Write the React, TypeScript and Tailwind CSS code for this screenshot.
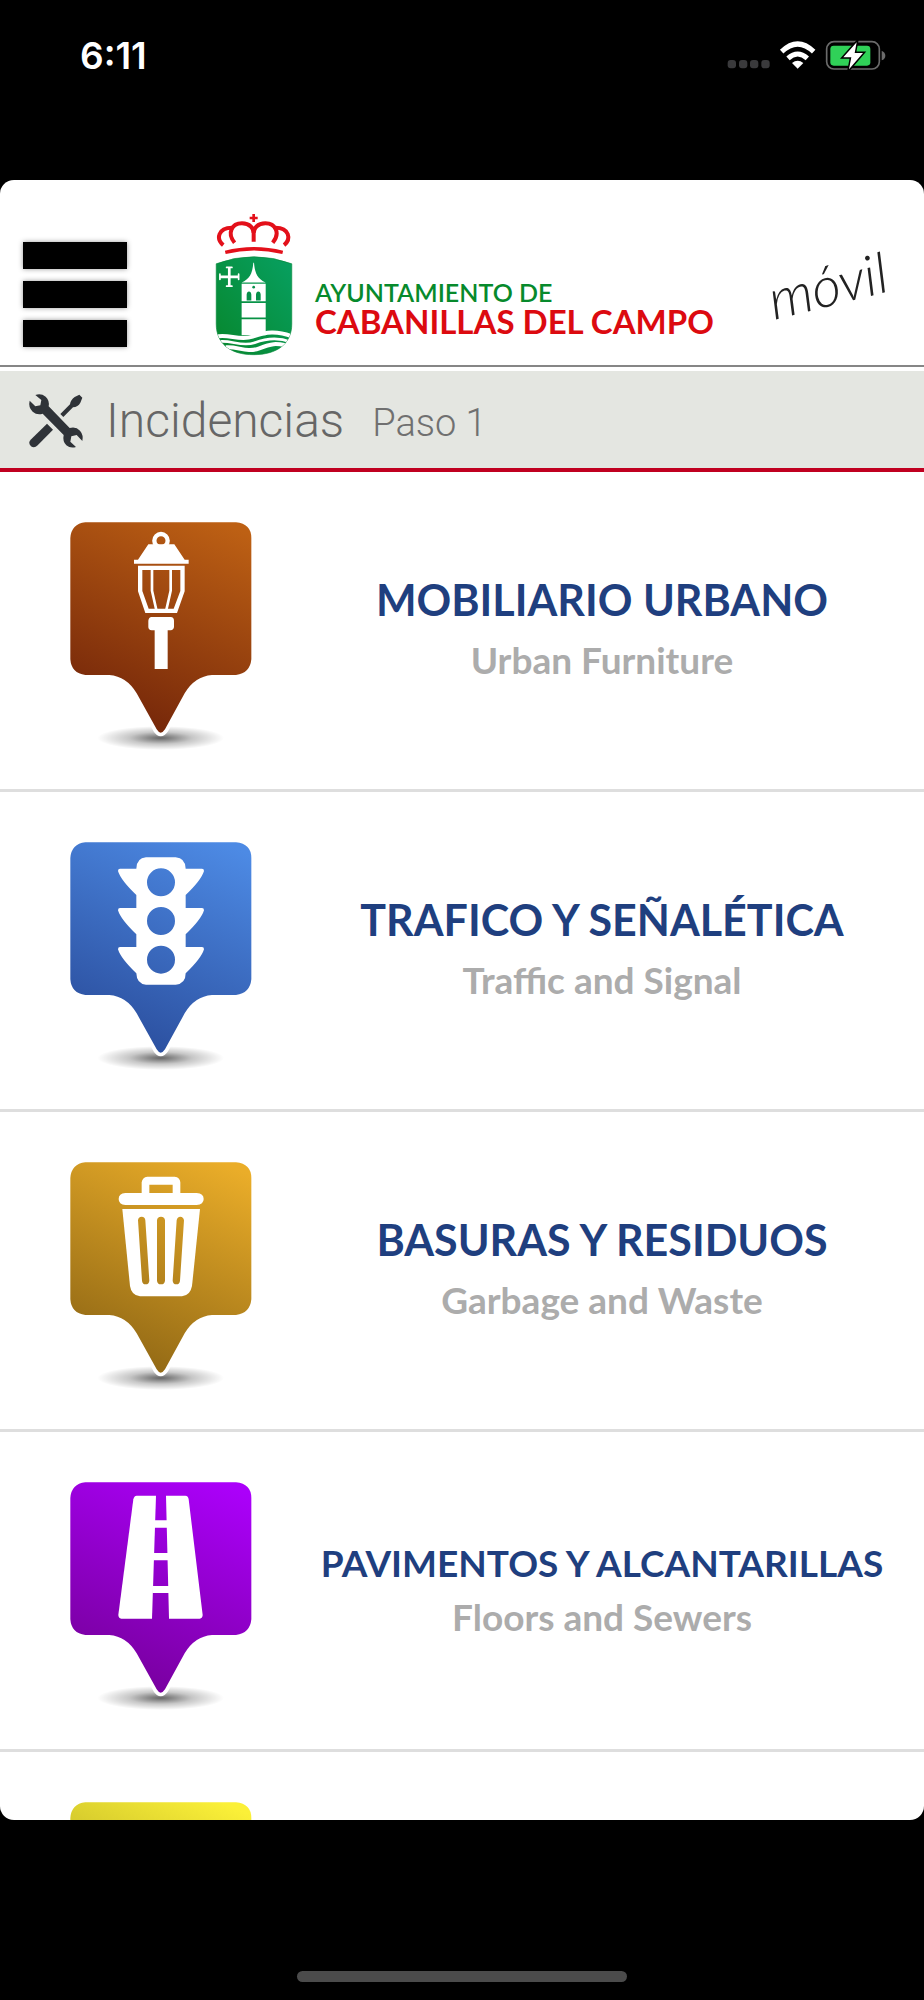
import React from 'react';

type GlyphName = 'lamp' | 'traffic' | 'trash' | 'road';

interface Category {
  id: string;
  title?: string;
  subtitle?: string;
  glyph?: GlyphName;
  from: string;
  to: string;
  compact?: boolean;
}

const categories: Category[] = [
  { id: 'mobiliario', title: 'MOBILIARIO URBANO', subtitle: 'Urban Furniture', glyph: 'lamp', from: '#bd6014', to: '#78290a' },
  { id: 'trafico', title: 'TRAFICO Y SEÑALÉTICA', subtitle: 'Traffic and Signal', glyph: 'traffic', from: '#4d8ae4', to: '#2d52a2' },
  { id: 'basuras', title: 'BASURAS Y RESIDUOS', subtitle: 'Garbage and Waste', glyph: 'trash', from: '#eaad29', to: '#966c16' },
  { id: 'pavimentos', title: 'PAVIMENTOS Y ALCANTARILLAS', subtitle: 'Floors and Sewers', glyph: 'road', from: '#ab00fa', to: '#7a00a2', compact: true },
  { id: 'otros', from: '#fbf038', to: '#9a8f1c' },
];

export default function App() {
  return (
    <div className="flex h-screen flex-col bg-black font-['Lato',sans-serif]">
      <StatusBar />

      <main className="flex min-h-0 flex-1 flex-col overflow-hidden rounded-[14px] bg-white">
        <Header />

        {/* Section title */}
        <div className="mt-1 flex h-[101px] shrink-0 items-center border-b-4 border-[#c00020] bg-[#e4e6e1] pt-0.5 pl-7 font-['Roboto',sans-serif] font-light">
          <ToolsIcon />
          <h1 className="ml-[22px] text-5xl text-[#666]">Incidencias</h1>
          <span className="ml-7 pt-1 text-[38px] leading-[48px] text-[#707070]">Paso 1</span>
        </div>

        {/* Categories */}
        <ul className="min-h-0 flex-1 overflow-y-auto [scrollbar-width:none]">
          {categories.map((category) => (
            <li key={category.id} className="border-b-3 border-[#dedede]">
              <CategoryRow category={category} />
            </li>
          ))}
        </ul>
      </main>

      <footer className="flex h-[180px] shrink-0 items-end justify-center pb-[18px]">
        <div className="h-[11px] w-[330px] rounded-full bg-[#4b4b4b]" />
      </footer>
    </div>
  );
}

function StatusBar() {
  return (
    <div className="flex h-[180px] shrink-0 items-start justify-between pt-8 pr-[38px] pl-20">
      <span className="font-['Inter',sans-serif] text-[37px] leading-[48px] font-semibold text-white">6:11</span>
      <svg className="mt-2 h-8 w-[160px]" viewBox="20 45 480 96" fill="none">
        <g fill="#3a3a3c">
          <rect x="25" y="105" width="25" height="25" rx="9" />
          <rect x="59" y="105" width="25" height="25" rx="9" />
          <rect x="92" y="105" width="25" height="25" rx="9" />
          <rect x="126" y="105" width="25" height="25" rx="9" />
        </g>
        {/* wifi */}
        <g stroke="#fff" strokeWidth="15">
          <path d="M187 80Q235 34 283 80" />
          <path d="M206 100Q235 74 264 100" />
        </g>
        <path d="M218 114Q235 100 252 114L235 131Z" fill="#fff" />
        {/* battery */}
        <rect x="322" y="50" width="158" height="82" rx="22" stroke="#6b6b6b" strokeWidth="5" />
        <path d="M487 77Q498 82 498 92T487 106Z" fill="#6b6b6b" />
        <rect x="333" y="62" width="120" height="60" rx="10" fill="#30d158" />
        <path d="M412 52L372 97H396L389 133L431 84H406Z" fill="#fff" stroke="#000" strokeWidth="9" paintOrder="stroke" />
      </svg>
    </div>
  );
}

function Header() {
  return (
    <header className="flex h-[187px] shrink-0 items-center border-b-2 border-[#868686] pt-6 pr-9 pl-[23px]">
      <button type="button" className="flex w-[104px] shrink-0 flex-col gap-3 pt-5">
        <span className="h-[27px] bg-black shadow-[0_0_5px_#999]" />
        <span className="h-[27px] bg-black shadow-[0_0_5px_#999]" />
        <span className="h-[27px] bg-black shadow-[0_0_5px_#999]" />
      </button>
      <Crest />
      <div className="ml-[22px] pt-12 whitespace-nowrap">
        <p className="text-[25px] leading-6 font-semibold text-[#078a2c]">AYUNTAMIENTO DE</p>
        <p className="text-[33px] leading-[34px] font-bold text-[#dc0a10]">CABANILLAS DEL CAMPO</p>
      </div>
      <span className="ml-auto -rotate-14 text-[56px] font-light text-[#222] italic">móvil</span>
    </header>
  );
}

function Crest() {
  return (
    <svg className="ml-[88px] h-[143px] w-[78px] shrink-0" viewBox="46 38 232 428" fill="none">
      <defs>
        <linearGradient id="crest-field" x1="0" y1="1" x2="1" y2="0">
          <stop offset="0" stopColor="#07862c" />
          <stop offset="1" stopColor="#07a061" />
        </linearGradient>
        <clipPath id="crest-clip">
          <path d="M49 190Q161 148 275 190V370C275 430 230 462 161 462S49 430 49 370Z" />
        </clipPath>
      </defs>
      {/* crown */}
      <g stroke="#e3101a" strokeWidth="12">
        <path d="M161 41V65M149 53H173" strokeWidth="8" />
        <path d="M70 134C48 116 54 82 96 82" />
        <path d="M252 134C274 116 268 82 226 82" />
        <path d="M104 127C80 98 96 69 126 69C150 69 161 84 161 98V124" />
        <path d="M218 127C242 98 226 69 196 69C172 69 161 84 161 98" />
        <path d="M76 156Q161 134 248 156" strokeWidth="10" />
      </g>
      <path d="M49 190Q161 148 275 190V370C275 430 230 462 161 462S49 430 49 370Z" fill="url(#crest-field)" stroke="#078a3c" strokeWidth="2" />
      {/* cross */}
      <path d="M60 229H116M88 201V257" stroke="#fff" strokeWidth="8" />
      <path d="M60 221V237M116 221V237M80 201H96M80 257H96" stroke="#fff" strokeWidth="5" strokeLinecap="round" />
      {/* tower */}
      <g fill="#fff">
        <path d="M160 187H162C165 222 174 236 197 246H125C148 236 157 222 160 187Z" />
        <path d="M125 250H197V302H125ZM125 307H197V351H125ZM125 356H197V404H125Z" />
      </g>
      <g fill="#07904a">
        <circle cx="161" cy="260" r="4" />
        <path d="M140 300V282Q141 273 147 273T154 282V300ZM168 300V282Q169 273 175 273T182 282V300Z" />
      </g>
      {/* river */}
      <g clipPath="url(#crest-clip)" stroke="#fff">
        <path d="M48 408C85 398 118 422 158 408S230 390 278 408" strokeWidth="12" />
        <path d="M56 423C92 417 126 440 164 426S236 410 272 424" strokeWidth="8" />
        <path d="M78 440C112 436 140 458 178 443S228 428 256 434" strokeWidth="12" />
      </g>
    </svg>
  );
}

function ToolsIcon() {
  return (
    <svg className="size-14 shrink-0" viewBox="84 668 168 168" fill="#2f3338">
      <path d="M181 731L210 702Q212 688 224 680L238 673L247 682L241 697Q234 710 219 711L190 740Z" />
      <path d="M141 760L159 778L113 825Q103 835 93 828Q83 818 92 808Z" />
      <path d="M106 674Q123 668 137 679Q149 690 146 708L209 773Q228 768 240 781Q251 794 247 812L230 794L214 798L211 814L228 830Q211 835 199 825Q187 813 191 794L128 730Q111 735 98 724Q84 710 89 691L106 708L121 705L124 689Z" />
    </svg>
  );
}

function CategoryRow({ category }: { category: Category }) {
  return (
    <button type="button" className="flex h-[317px] w-full items-stretch pl-10">
      <Pin category={category} />
      {category.title && (
        <span className="flex flex-1 flex-col items-center justify-center pb-1.5 whitespace-nowrap">
          <span className={`leading-[56px] font-bold text-[#1f3f7f] ${category.compact ? 'text-[37px]' : 'text-[43px]'}`}>
            {category.title}
          </span>
          <span className={`text-[37px] leading-[48px] font-bold text-[#acacac] ${category.compact ? 'mt-0.5' : 'mt-2'}`}>
            {category.subtitle}
          </span>
        </span>
      )}
    </button>
  );
}

function Pin({ category }: { category: Category }) {
  const fill = `url(#pin-${category.id})`;
  return (
    <svg className="mt-[50px] h-[230px] w-60 shrink-0" viewBox="0 64 720 690">
      <defs>
        <linearGradient id={`pin-${category.id}`} gradientUnits="userSpaceOnUse" x1="560" y1="70" x2="290" y2="650">
          <stop offset="0" stopColor={category.from} />
          <stop offset="1" stopColor={category.to} />
        </linearGradient>
        <radialGradient id={`shadow-${category.id}`}>
          <stop offset="0" stopColor="#000" stopOpacity="0.6" />
          <stop offset="0.5" stopColor="#000" stopOpacity="0.22" />
          <stop offset="1" stopColor="#000" stopOpacity="0" />
        </radialGradient>
      </defs>
      <ellipse cx="362" cy="712" rx="190" ry="36" fill={`url(#shadow-${category.id})`} />
      <path
        d="M136 65H588Q634 70 634 112V476Q630 518 588 523H516Q464 527 434 578L375 686Q362 706 350 686L290 578Q260 527 208 523H136Q94 518 91 476V112Q94 70 136 65Z"
        fill={fill}
        stroke="#fff"
        strokeWidth="22"
        strokeLinejoin="round"
        paintOrder="stroke"
      />
      {category.glyph === 'lamp' && <LampGlyph />}
      {category.glyph === 'traffic' && <TrafficGlyph />}
      {category.glyph === 'trash' && <TrashGlyph fill={fill} />}
      {category.glyph === 'road' && <RoadGlyph />}
    </svg>
  );
}

function LampGlyph() {
  return (
    <g fill="#fff">
      <circle cx="363" cy="120" r="20" fill="none" stroke="#fff" strokeWidth="13" />
      <path d="M325 131H403L434 177H446V189H282V177H294Z" />
      <path fillRule="evenodd" d="M294 195H434V272L411 337H316L294 272ZM307 208V271L326 324H401L421 271V208Z" />
      <path d="M336 205V270L349 328M392 205V270L379 328" fill="none" stroke="#fff" strokeWidth="8" />
      <path d="M335 349H392Q402 350 402 360V379Q401 388 392 389H383V505H344V389H335Q325 388 325 379V360Q326 350 335 349Z" />
    </g>
  );
}

function TrafficGlyph() {
  return (
    <path
      fill="#fff"
      fillRule="evenodd"
      d="M318 110H407Q436 112 437 144H486Q492 144 492 151Q484 178 437 223V262H486Q492 262 492 269Q484 296 437 341V379H486Q492 379 492 386Q484 413 437 458Q437 490 407 492H318Q290 490 289 458Q242 413 234 386Q234 379 240 379H289V341Q242 296 234 269Q234 262 240 262H289V223Q242 178 234 151Q234 144 240 144H289Q290 112 318 110ZM363 143A42 42 0 1 0 363 227A42 42 0 1 0 363 143ZM363 259A42 42 0 1 0 363 343A42 42 0 1 0 363 259ZM363 375A42 42 0 1 0 363 459A42 42 0 1 0 363 375Z"
    />
  );
}

function TrashGlyph({ fill }: { fill: string }) {
  return (
    <g fill="#fff">
      <path fillRule="evenodd" d="M322 108H404Q420 110 421 125V157H470Q491 158 491 175T470 193H256Q236 192 236 175T256 157H305V125Q307 110 322 108ZM328 132V157H398V132Z" />
      <path d="M247 205H480L456 436Q451 464 426 467H300Q274 464 270 436Z" />
      {/* slots */}
      <path fill={fill} d="M294 239Q295 228 305 228T316 239L328 420Q327 431 317 431T306 420ZM351 239Q352 228 363 228T375 239V420Q374 431 363 431T351 420ZM410 239Q412 228 421 228T432 239L420 420Q419 431 409 431T398 420Z" />
    </g>
  );
}

function RoadGlyph() {
  return (
    <g fill="#fff">
      <path d="M290 105H348L336 474H244Q235 472 235 463L280 116Q282 106 290 105Z" />
      <path d="M378 105H436Q445 106 446 116L488 463Q488 472 479 474H387Z" />
      <path d="M342 179H384V201H342ZM340 277H386V299H340ZM337 376H388V397H337Z" />
    </g>
  );
}
